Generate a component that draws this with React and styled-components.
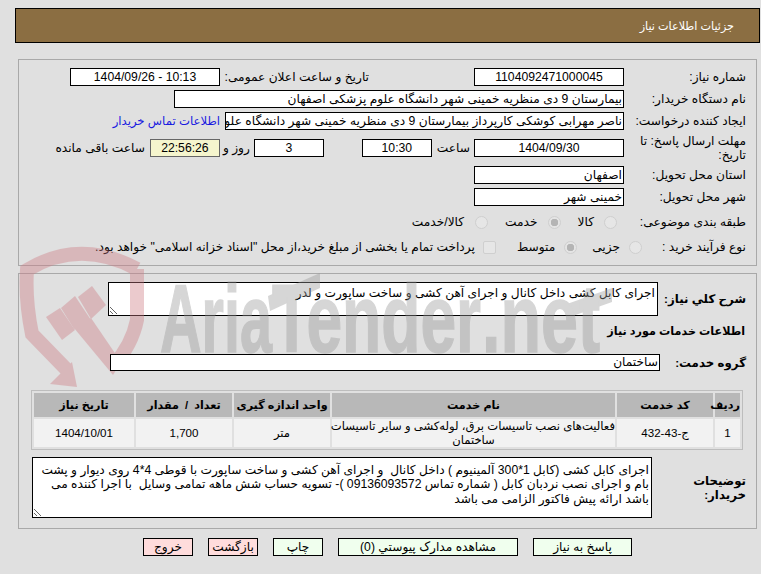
import React from "react";
import styled, { createGlobalStyle } from "styled-components";

const Global = createGlobalStyle`
  html, body { margin: 0; padding: 0; background: #e0e0e0; }
  body { font-family: "Liberation Sans", "DejaVu Sans", sans-serif; font-size: 12.2px; color: #000; }
  * { box-sizing: border-box; }
`;

const Page = styled.div`
  position: relative;
  width: 761px;
  height: 574px;
  overflow: hidden;
  padding-top: 8px;
  direction: rtl;
`;
const Watermark = styled.svg`
  position: absolute;
  left: 0;
  top: 0;
  width: 761px;
  height: 574px;
  z-index: 1;
  opacity: 0.4;
  pointer-events: none;
`;
const Header = styled.header`
  height: 35px;
  margin: 0 1px 16px 15px;
  padding: 3px 25px 0 0;
  background: #8b6e42;
  border: 1px solid #000;
  color: #fff;
  font-size: 11.2px;
  line-height: 29px;
`;
const Panel = styled.section`
  margin: 0 4px 0 18px;
  height: ${(p) => p.$height}px;
  margin-bottom: ${(p) => p.$after || 0}px;
  border: 1px solid #a9a9a9;
  padding: 8px 10px 0 0;
`;
const Row = styled.div`
  display: flex;
  align-items: center;
  height: ${(p) => p.$h || 18}px;
  margin-bottom: ${(p) => p.$after ?? 4}px;
`;
const Label = styled.div`
  flex: none;
  width: ${(p) => p.$w || 122}px;
  margin-right: ${(p) => p.$mr || 0}px;
  font-size: ${(p) => (p.$bold ? "11.8px" : "inherit")};
  font-weight: ${(p) => (p.$bold ? 700 : 400)};
  line-height: 14px;
  white-space: ${(p) => (p.$one ? "nowrap" : "normal")};
`;
const Text = styled.span`
  flex: none;
  margin-right: ${(p) => p.$mr || 0}px;
  white-space: nowrap;
`;
const Field = styled.div`
  flex: none;
  width: ${(p) => p.$w}px;
  height: ${(p) => p.$h || 18}px;
  margin-right: ${(p) => p.$mr || 0}px;
  padding: 0 1px;
  background: ${(p) => p.$bg || "#fff"};
  border: 1px solid ${(p) => p.$line || "#000"};
  text-align: ${(p) => (p.$center ? "center" : "right")};
  line-height: 16px;
  white-space: nowrap;
  overflow: hidden;
`;
const OverField = styled(Field)`
  position: relative;
  z-index: 2;
  line-height: 15px;
`;
const Link = styled.a`
  flex: none;
  margin-right: 5px;
  color: #1a1ae0;
  font-size: 11.7px;
  white-space: nowrap;
`;
const Radio = styled.input.attrs({ type: "radio", disabled: true })`
  appearance: none;
  flex: none;
  width: 13px;
  height: 13px;
  margin: 0 ${(p) => p.$mr || 0}px 0 0;
  border-radius: 50%;
  border: 1px solid #cfcfcf;
  background: ${(p) => (p.defaultChecked ? "radial-gradient(circle, #b4b4b4 0 3.5px, #e4e4e4 4px)" : "#e6e6e6")};
`;
const Check = styled.input.attrs({ type: "checkbox", disabled: true })`
  appearance: none;
  flex: none;
  width: 13px;
  height: 13px;
  margin: 0 21px 0 0;
  border: 1px solid #cfcfcf;
  border-radius: 2px;
  background: #e6e6e6;
`;
const Area = styled.textarea`
  display: block;
  flex: none;
  width: ${(p) => p.$w}px;
  height: ${(p) => p.$h}px;
  margin: 0;
  padding: ${(p) => p.$top || 3}px 2px 0;
  background: #fff;
  border: 1px solid #000;
  border-radius: 0;
  outline: none;
  resize: both;
  direction: rtl;
  font: 12.2px/14.4px "Liberation Sans", "DejaVu Sans", sans-serif;
  color: #000;
  overflow: hidden;
`;
const Heading = styled.div`
  height: 22px;
  margin: 4px 1px 12px 0;
  font-size: 11.2px;
  font-weight: 700;
  line-height: 22px;
`;
const TableBox = styled.table`
  width: 712px;
  height: 58px;
  margin: 0 3px 7px 0;
  border: 1px solid #bdbdbd;
  border-collapse: separate;
  border-spacing: 2px;
  table-layout: fixed;
`;
const Th = styled.th`
  width: ${(p) => p.$w}px;
  height: 24px;
  padding: 0;
  background: #b8b8b8;
  font-size: 11.2px;
  font-weight: 700;
  word-spacing: ${(p) => p.$ws || 0}px;
  text-align: center;
  white-space: nowrap;
`;
const Td = styled.td`
  height: 28px;
  padding: 0;
  background: #f2f2f2;
  font-size: 11.6px;
  line-height: 14px;
  text-align: center;
  white-space: nowrap;
`;
const Buttons = styled.div`
  display: flex;
  gap: 15px;
  margin: 9px 129px 0 0;
`;
const Button = styled.button`
  width: ${(p) => p.$w}px;
  height: 18px;
  padding: 0;
  background: ${(p) => (p.$red ? "#ffdcdc" : "#f0ffee")};
  border: 1px solid #000;
  border-radius: 0;
  font: 12.2px "Liberation Sans", "DejaVu Sans", sans-serif;
  color: #000;
`;

const items = [
  ["ردیف", 25, 0], ["کد خدمت", 96, 0], ["نام خدمت", 283, 0], ["واحد اندازه گیری", 96, 0], ["تعداد / مقدار", 96, 3], ["تاریخ نیاز", 100, 0],
];

const Mark = ({ x, len, children }) => (
  <text x={x} y="352" direction="ltr" fontFamily="'Liberation Sans', sans-serif" fontWeight="700" fontSize="96" fill="#9a9a9a" stroke="#9a9a9a" strokeWidth="1.5" textLength={len} lengthAdjust="spacingAndGlyphs">{children}</text>
);

export default function App() {
  return (
    <Page>
      <Global />
      <Watermark viewBox="0 0 761 574" aria-hidden="true">
        <path d="M137 269 Q80 238 27 270 Q25 300 32 334 L66 369 M137 269 L137 320 Q132 345 113 366" fill="none" strokeWidth="14" stroke="#ce7c84" />
        <g fill="#ce7c84">
          <polygon points="50,384 77,387 72,362" />
          <polygon points="92,286 106,305 91,319 78,297" />
          <polygon points="75,296 91,320 74,329 61,308" />
          <polygon points="60,308 75,330 62,340 46,317" />
          <polygon points="74,328 91,318 121,362 113,375" />
        </g>
        <polygon points="268,296 320,273 320,288 270,311" fill="#9a9a9a" />
        <polygon points="567,304 612,288 612,302 567,318" fill="#9a9a9a" />
        <Mark x={160} len={112}>Aria</Mark>
        <Mark x={272} len={209}>Tender</Mark>
        <Mark x={482} len={118}>.net</Mark>
      </Watermark>
      <Header>جزئیات اطلاعات نیاز</Header>
      <Panel $height={207} $after={7}>
        <Row>
          <Label>شماره نیاز:</Label>
          <Field $w={150} $center>1104092471000045</Field>
          <Label $w={144} $mr={105} $one>تاریخ و ساعت اعلان عمومی:</Label>
          <Field $w={150} $mr={5} $center>10:13 - 1404/09/26</Field>
        </Row>
        <Row>
          <Label>نام دستگاه خریدار:</Label>
          <Field $w={450}>بیمارستان 9 دی منظریه خمینی شهر دانشگاه علوم پزشکی اصفهان</Field>
        </Row>
        <Row>
          <Label>ایجاد کننده درخواست:</Label>
          <Field $w={399}>ناصر مهرابی کوشکی کارپرداز بیمارستان 9 دی منظریه خمینی شهر دانشگاه علوم پزشکی اصفهان</Field>
          <Link>اطلاعات تماس خریدار</Link>
        </Row>
        <Row $h={28}>
          <Label>مهلت ارسال پاسخ: تا تاریخ:</Label>
          <Field $w={150} $center>1404/09/30</Field>
          <Text $mr={4}>ساعت</Text>
          <Field $w={70} $mr={5} $center>10:30</Field>
          <Field $w={70} $mr={38} $center>3</Field>
          <Text $mr={4}>روز و</Text>
          <Field $w={70} $mr={3} $bg="#f5f5cd" $line="#666" $center>22:56:26</Field>
          <Text $mr={5}>ساعت باقی مانده</Text>
        </Row>
        <Row>
          <Label>استان محل تحویل:</Label>
          <Field $w={150}>اصفهان</Field>
        </Row>
        <Row $after={6}>
          <Label>شهر محل تحویل:</Label>
          <Field $w={150}>خمینی شهر</Field>
        </Row>
        <Row $h={20} $after={5}>
          <Label>طبقه بندی موضوعی:</Label>
          <Radio $mr={7} />
          <Text $mr={10}>کالا</Text>
          <Radio defaultChecked $mr={17} />
          <Text $mr={10}>خدمت</Text>
          <Radio $mr={17} />
          <Text $mr={11}>کالا/خدمت</Text>
        </Row>
        <Row $h={20}>
          <Label $w={104}>نوع فرآیند خرید :</Label>
          <Radio />
          <Text $mr={9}>جزیی</Text>
          <Radio defaultChecked $mr={15} />
          <Text $mr={9}>متوسط</Text>
          <Check />
          <Text $mr={8}>پرداخت تمام یا بخشی از مبلغ خرید،از محل "اسناد خزانه اسلامی" خواهد بود.</Text>
        </Row>
      </Panel>
      <Panel $height={256}>
        <Row $h={34} $after={0}>
          <Label $w={88} $bold>شرح کلي نیاز:</Label>
          <Area $w={550} $h={34} readOnly defaultValue="اجرای کابل کشی داخل کانال و اجرای آهن کشی و ساخت ساپورت و لدر" />
        </Row>
        <Heading>اطلاعات خدمات مورد نیاز</Heading>
        <Row $h={17} $after={19}>
          <Label $w={86} $bold>گروه خدمت:</Label>
          <OverField $w={550} $h={17}>ساختمان</OverField>
        </Row>
        <TableBox>
          <thead>
            <tr>{items.map(([t, w, ws]) => <Th key={t} $w={w} $ws={ws}>{t}</Th>)}</tr>
          </thead>
          <tbody>
            <tr>
              <Td>1</Td>
              <Td>ج-43-432</Td>
              <Td>فعالیت‌های نصب تاسیسات برق، لوله‌کشی و سایر تاسیسات<br />ساختمان</Td>
              <Td>متر</Td>
              <Td>1,700</Td>
              <Td>1404/10/01</Td>
            </tr>
          </tbody>
        </TableBox>
        <Row $h={61}>
          <Label $w={94} $bold>توضیحات خریدار:</Label>
          <Area $w={620} $h={61} $top={5} readOnly defaultValue="اجرای کابل کشی (کابل 1*300 آلمینیوم ) داخل کانال  و اجرای آهن کشی و ساخت ساپورت با قوطی 4*4 روی دیوار و پشت بام و اجرای نصب نردبان کابل ( شماره تماس 09136093572 )- تسویه حساب شش ماهه تمامی وسایل  با اجرا کننده می باشد ارائه پیش فاکتور الزامی می باشد" />
        </Row>
      </Panel>
      <Buttons>
        <Button $w={99}>پاسخ به نیاز</Button>
        <Button $w={180}>مشاهده مدارک پیوستي (0)</Button>
        <Button $w={50}>چاپ</Button>
        <Button $w={50} $red>بازگشت</Button>
        <Button $w={50} $red>خروج</Button>
      </Buttons>
    </Page>
  );
}
